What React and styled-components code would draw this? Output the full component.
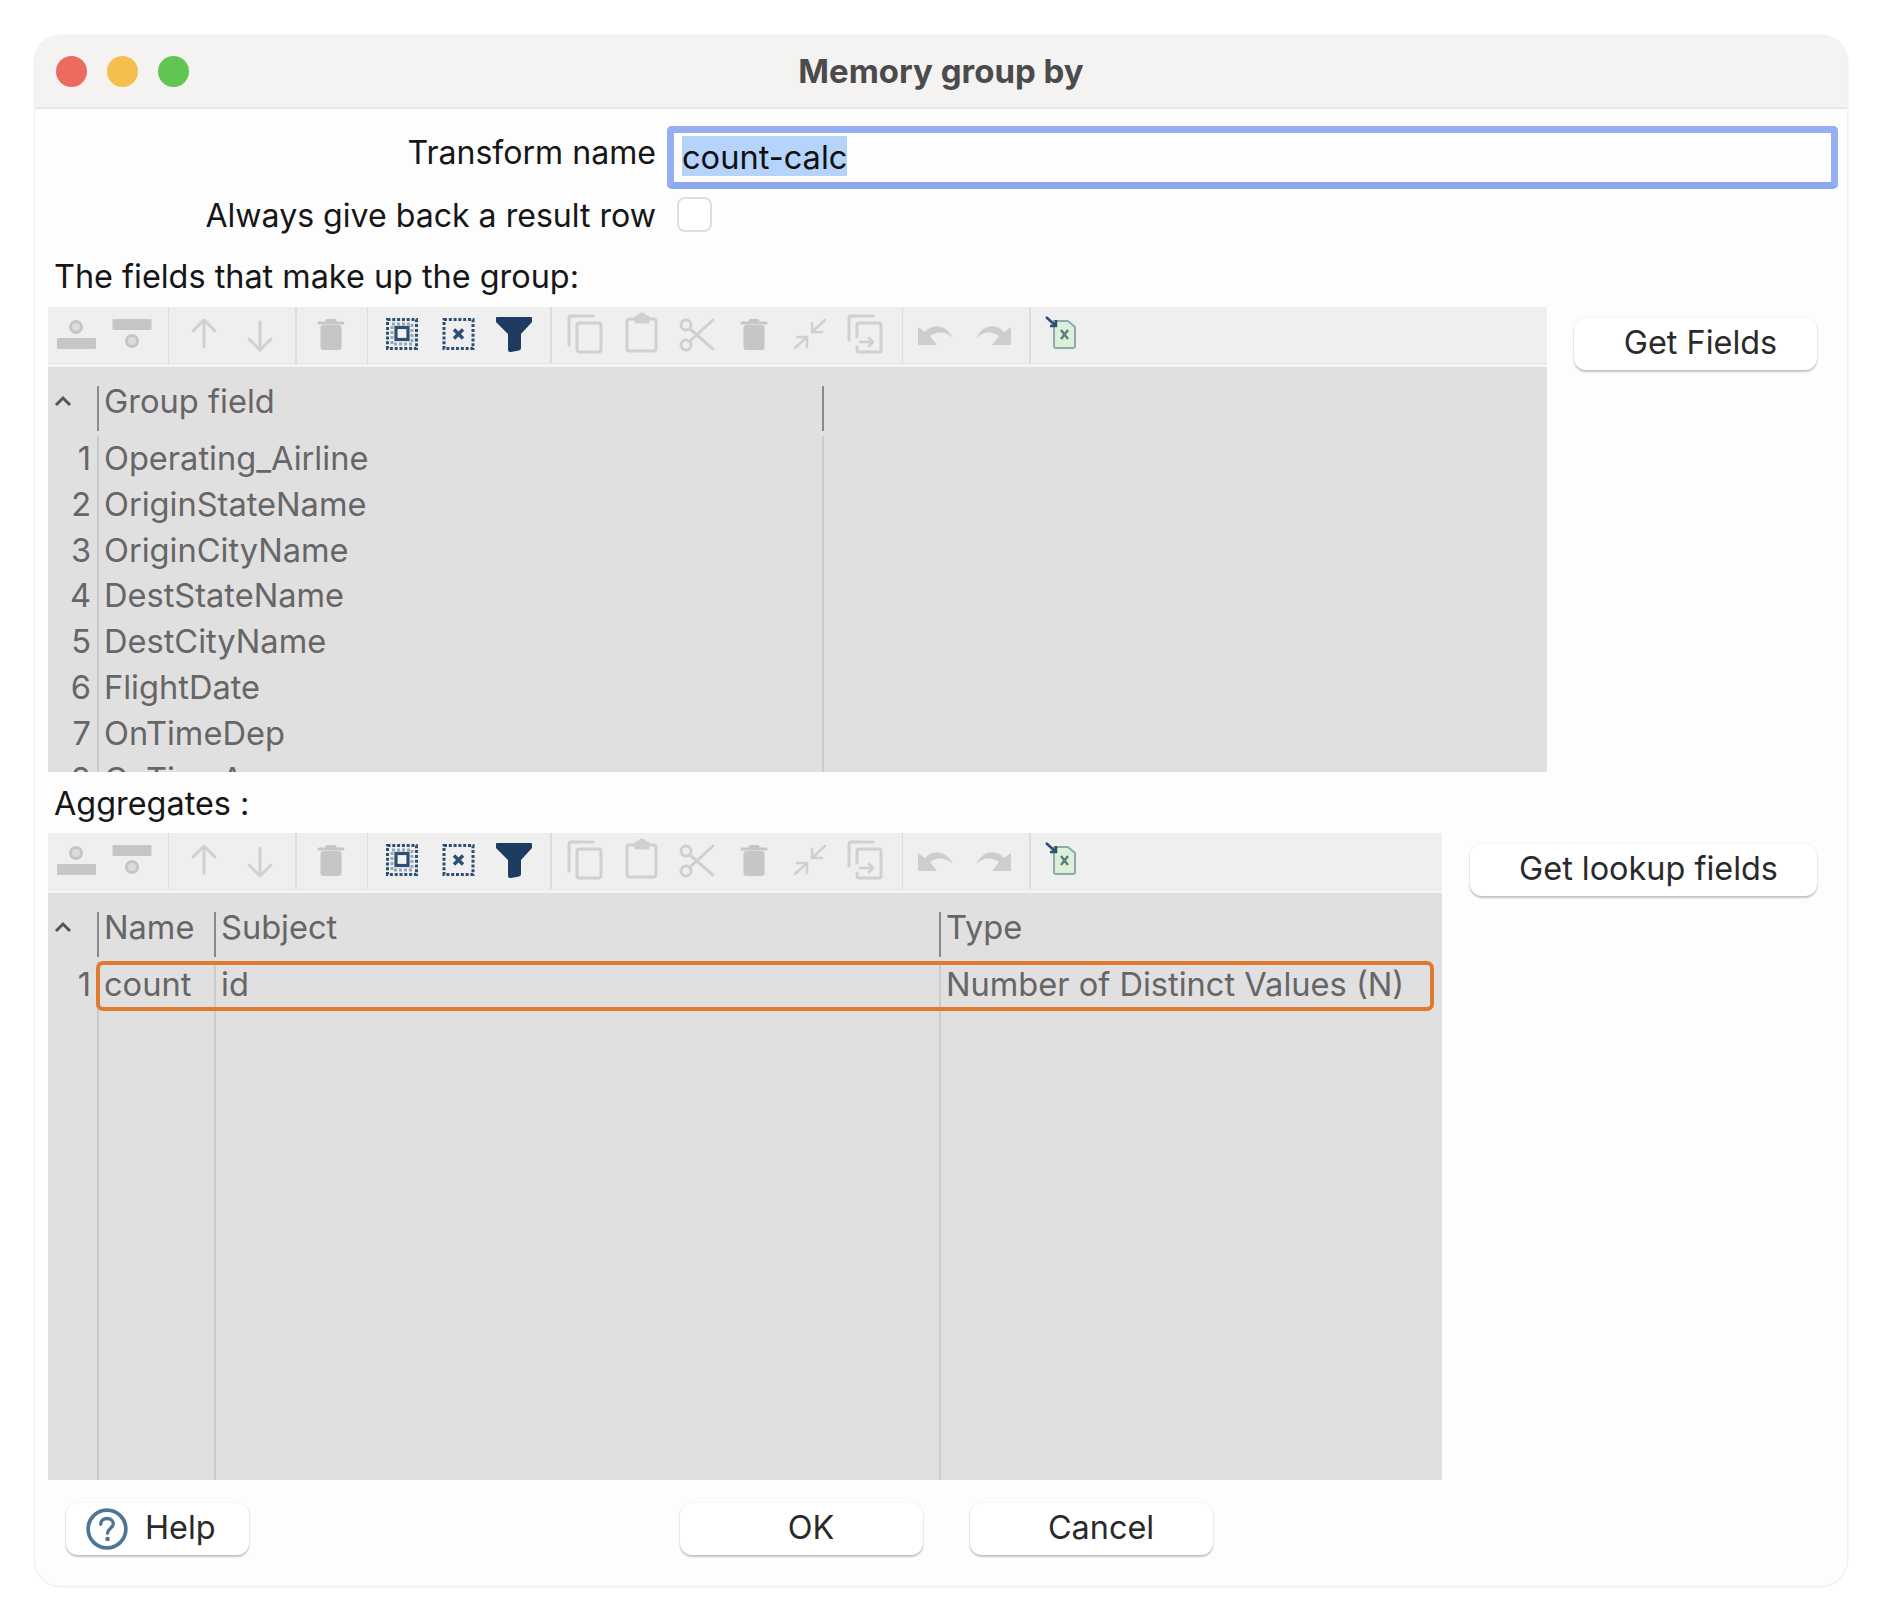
import React from "react";
import styled, { createGlobalStyle } from "styled-components";

const GlobalStyle = createGlobalStyle`
  html, body {
    margin: 0;
    padding: 0;
    background: #ffffff;
    font-family: "Inter", "Liberation Sans", sans-serif;
  }
`;

const GRAY = "#c6c6c6";
const LINE = "#d0d0d0";
const NAVY = "#2c4f76";

/* each glyph is drawn in the 56x56 box of one toolbar button */
const Trash = () => (
  <>
    <path d="M24 13.5H32M16 16H40" fill="none" stroke={GRAY} strokeWidth="3" strokeLinecap="round" />
    <rect x="17.5" y="18" width="21" height="25" rx="3" fill={GRAY} />
  </>
);

const ICONS = {
  rowBefore: (
    <>
      <circle cx="28" cy="20" r="5.5" fill="#dcdcdc" stroke={GRAY} strokeWidth="3" />
      <rect x="9" y="31" width="39" height="11" rx="1" fill={GRAY} />
    </>
  ),
  rowAfter: (
    <>
      <rect x="8.5" y="12" width="39" height="11" rx="1" fill={GRAY} />
      <circle cx="28" cy="34" r="5.5" fill="#dcdcdc" stroke={GRAY} strokeWidth="3" />
    </>
  ),
  up: <path d="M29 40V14M18 24L29 13L40 24" fill="none" stroke={LINE} strokeWidth="3" strokeLinecap="round" strokeLinejoin="round" />,
  down: <path d="M29 15V42M18 32L29 43L40 32" fill="none" stroke={LINE} strokeWidth="3" strokeLinecap="round" strokeLinejoin="round" />,
  trash: <Trash />,
  selectAll: (
    <>
      <rect x="13.5" y="12.5" width="29" height="29" fill="none" stroke={NAVY} strokeWidth="3" strokeDasharray="3 1.8" />
      <rect x="18" y="17" width="20" height="20" fill="none" stroke={NAVY} strokeOpacity="0.45" strokeWidth="3" strokeDasharray="3 2" />
      <rect x="22" y="20.5" width="12" height="12" fill="#f4f4f4" stroke={NAVY} strokeWidth="3.2" />
    </>
  ),
  clearAll: (
    <>
      <rect x="14" y="12.5" width="29" height="29" fill="none" stroke={NAVY} strokeWidth="3" strokeDasharray="3 1.8" />
      <path d="M24 22.5L33 31.5M33 22.5L24 31.5" fill="none" stroke={NAVY} strokeWidth="3.5" />
    </>
  ),
  filter: <path d="M10 11Q10 10 11 10H45Q46 10 46 11V15L35 27V41Q35 43 33 43.5L25 45Q22 45.5 22 43V27L10 15Z" fill="#1d3c5f" />,
  copy: (
    <g fill="none" stroke={LINE} strokeWidth="3" strokeLinejoin="round" strokeLinecap="round">
      <path d="M11 38V11Q11 9 13 9H35" />
      <rect x="19" y="16" width="24" height="29" rx="2.5" />
    </g>
  ),
  paste: (
    <g fill="none" stroke={LINE} strokeWidth="3" strokeLinejoin="round">
      <rect x="13" y="12" width="29" height="32" rx="2.5" />
      <path d="M22 12V10H25A3 3 0 0 1 31 10H34V15H22Z" fill={LINE} />
    </g>
  ),
  cut: (
    <g fill="none" stroke={LINE} strokeWidth="3" strokeLinecap="round">
      <circle cx="16" cy="18" r="5" />
      <circle cx="16" cy="38" r="5" />
      <path d="M20 22L43 42M20 34L43 13" />
    </g>
  ),
  collapse: (
    <g fill="none" stroke={LINE} strokeWidth="2.5" strokeLinecap="round" strokeLinejoin="round">
      <path d="M43 13L30 25M30 16V25H40" />
      <path d="M13 41L25 30M15 30H25V40" />
    </g>
  ),
  duplicate: (
    <g fill="none" stroke={LINE} strokeWidth="3" strokeLinejoin="round" strokeLinecap="round">
      <path d="M11 33V11Q11 9 13 9H35" />
      <path d="M19 30V18Q19 16 21 16H41Q43 16 43 18V43Q43 45 41 45H21Q19 45 19 43V40" />
      <path d="M22 35H35M31 31L35 35L31 39" strokeWidth="2.5" />
    </g>
  ),
  undo: <path d="M9 20L16 25C23 17 36 16 44 31C36 24 28 24 21 29L28 38H9Z" fill="#cdcdcd" />,
  redo: <path d="M46 20L39 25C32 17 19 16 11 31C19 24 27 24 34 29L27 38H46Z" fill="#cdcdcd" />,
  exportXls: (
    <g transform="translate(-2 0)">
      <path d="M19 14H33L40 20V39Q40 41 38 41H21Q19 41 19 39Z" fill="#dcefd8" stroke="#93a8ad" strokeWidth="2" strokeLinejoin="round" />
      <path d="M11 10L21 19M21 13V19H15" fill="none" stroke={NAVY} strokeWidth="2.5" />
      <path d="M26 23L33 32M33 23L26 32" fill="none" stroke="#5d7d80" strokeWidth="2.5" />
    </g>
  ),
};

const TOOL_GROUPS = [
  ["rowBefore", "rowAfter"],
  ["up", "down"],
  ["trash"],
  ["selectAll", "clearAll", "filter"],
  ["copy", "paste", "cut", "trash", "collapse", "duplicate"],
  ["undo", "redo"],
  ["exportXls"],
];

const App = () => (
  <>
    <GlobalStyle />
    <Page>
      <Window>
        <TitleBar>
          <Lights>
            <Light $color="#ec6a5e" />
            <Light $color="#f4bf4f" />
            <Light $color="#61c554" />
          </Lights>
          <WindowTitle>Memory group by</WindowTitle>
        </TitleBar>

        <Form>
          <FormLabel $raised>Transform name</FormLabel>
          <NameField>
            <Selection>count-calc</Selection>
          </NameField>
          <FormLabel>Always give back a result row</FormLabel>
          <Checkbox />
        </Form>

        <SectionTitle>The fields that make up the group:</SectionTitle>
        <Section>
          <Panel $width={1499}>
            <Toolbar />
            <Table $height={405}>
              <Column $width={49}>
                <SortCell>
                  <SortChevron />
                </SortCell>
                {[1, 2, 3, 4, 5, 6, 7, 8].map((n) => (
                  <RowNumber key={n}>{n}</RowNumber>
                ))}
              </Column>
              <Column $width={725}>
                <HeadCell>Group field</HeadCell>
                <ColumnBody>
                  {["Operating_Airline", "OriginStateName", "OriginCityName", "DestStateName", "DestCityName", "FlightDate", "OnTimeDep", "OnTimeArr"].map((f) => (
                    <Cell key={f}>{f}</Cell>
                  ))}
                </ColumnBody>
              </Column>
              <Column $grow>
                <HeadCell />
                <ColumnBody />
              </Column>
            </Table>
          </Panel>
          <SideButton $width={243}>Get Fields</SideButton>
        </Section>

        <SectionTitle $tight>Aggregates :</SectionTitle>
        <Section>
          <Panel $width={1394}>
            <Toolbar />
            <Table $height={587}>
              <Column $width={49}>
                <SortCell>
                  <SortChevron />
                </SortCell>
                <RowNumber>1</RowNumber>
              </Column>
              <Column $width={117}>
                <HeadCell>Name</HeadCell>
                <ColumnBody>
                  <Cell>count</Cell>
                </ColumnBody>
              </Column>
              <Column $width={725}>
                <HeadCell>Subject</HeadCell>
                <ColumnBody>
                  <Cell>id</Cell>
                </ColumnBody>
              </Column>
              <Column $grow>
                <HeadCell>Type</HeadCell>
                <ColumnBody>
                  <Cell>Number of Distinct Values (N)</Cell>
                </ColumnBody>
              </Column>
              <RowHighlight />
            </Table>
          </Panel>
          <SideButton $width={347}>Get lookup fields</SideButton>
        </Section>

        <Footer>
          <HelpButton>
            <svg width="44" height="44" viewBox="0 0 42 42" aria-hidden="true">
              <circle cx="21" cy="21" r="18" fill="#fff" stroke="#4d7596" strokeWidth="3.5" />
              <path d="M15 16.5C15 12.5 18 11 21 11C24.5 11 27 13 27 16C27 20 21.5 20.5 21.5 25" fill="none" stroke="#4d7596" strokeWidth="3.2" strokeLinecap="round" />
              <circle cx="21.5" cy="30.5" r="2.2" fill="#4d7596" />
            </svg>
            <ButtonText>Help</ButtonText>
          </HelpButton>
          <FooterButtons>
            <DialogButton $width={243}>OK</DialogButton>
            <DialogButton $width={243}>Cancel</DialogButton>
          </FooterButtons>
        </Footer>
      </Window>
    </Page>
  </>
);

const Toolbar = () => (
  <ToolRow>
    {TOOL_GROUPS.map((group, i) => (
      <React.Fragment key={i}>
        {i > 0 && <ToolSeparator />}
        {group.map((name, j) => (
          <ToolIcon key={j} viewBox="1 0 56 56" aria-hidden="true">
            {ICONS[name]}
          </ToolIcon>
        ))}
      </React.Fragment>
    ))}
  </ToolRow>
);

const SortChevron = () => (
  <svg width="20" height="13" viewBox="0 0 20 13" aria-hidden="true">
    <path d="M3 10L10 3L17 10" fill="none" stroke="#555" strokeWidth="3" />
  </svg>
);

export default App;

const Page = styled.div`
  width: 1880px;
  height: 1608px;
  padding: 36px 32px 22px 35px;
  box-sizing: border-box;
  background: #ffffff;
`;

const Window = styled.div`
  width: 1812px;
  height: 1550px;
  box-sizing: border-box;
  background: #fdfdfd;
  border-radius: 26px;
  box-shadow: 0 0 0 1.5px #f1f1f1;
  overflow: hidden;
`;

const TitleBar = styled.div`
  position: relative;
  height: 73px;
  box-sizing: border-box;
  display: flex;
  align-items: center;
  justify-content: center;
  background: #f4f3f2;
  border-bottom: 2px solid #e6e6e6;
`;

const Lights = styled.div`
  position: absolute;
  left: 21px;
  top: 20px;
  display: flex;
  gap: 20px;
`;

const Light = styled.span`
  width: 31px;
  height: 31px;
  border-radius: 50%;
  background: ${(p) => p.$color};
`;

const WindowTitle = styled.div`
  font-size: 33px;
  font-weight: 700;
  color: #4b4b4b;
  margin-top: -2px;
`;

const Form = styled.div`
  display: grid;
  grid-template-columns: 621px 1fr;
  grid-template-rows: 63px 35px;
  column-gap: 11px;
  row-gap: 8px;
  align-items: center;
  padding: 17px 9px 0 0;
`;

const FormLabel = styled.div`
  font-size: 32.1px;
  line-height: 35px;
  padding: ${(p) => (p.$raised ? "0 0 10px" : "2px 0 0")};
  color: #161616;
  text-align: right;
  white-space: nowrap;
`;

const NameField = styled.div`
  height: 63px;
  box-sizing: border-box;
  padding: 3px 8px 0;
  display: flex;
  align-items: flex-start;
  background: #fefefe;
  border: 7px solid #96aff2;
  border-bottom-color: #8ba7ee;
  border-radius: 5px;
`;

const Selection = styled.span`
  height: 40px;
  line-height: 42px;
  font-size: 32.6px;
  color: #111;
  background: #b5d3fb;
`;

const Checkbox = styled.div`
  width: 35px;
  height: 35px;
  margin-left: 10px;
  box-sizing: border-box;
  background: #fff;
  border: 2px solid #dedede;
  border-radius: 8px;
`;

const SectionTitle = styled.div`
  margin: ${(p) => (p.$tight ? "12px" : "25px")} 0 ${(p) => (p.$tight ? "9px" : "10px")} 19px;
  height: 40px;
  line-height: 40px;
  font-size: 32.4px;
  color: #161616;
`;

const Section = styled.div`
  display: flex;
  justify-content: space-between;
  align-items: flex-start;
  padding: 0 30px 0 13px;
`;

const Panel = styled.div`
  width: ${(p) => p.$width}px;
`;

const ToolRow = styled.div`
  height: 57px;
  box-sizing: border-box;
  padding-left: 0.8px;
  display: flex;
  background: #efefef;
  border-bottom: 1px solid #e5e5e5;
`;

const ToolIcon = styled.svg`
  flex: 0 0 56px;
  width: 56px;
  height: 56px;
  filter: blur(0.5px);
`;

const ToolSeparator = styled.span`
  flex: 0 0 1.5px;
  margin: 0 7px;
  background: #dcdcdc;
`;

const Table = styled.div`
  position: relative;
  height: ${(p) => p.$height}px;
  display: flex;
  overflow: hidden;
  background: #e0e0e0;
  border-top: 3px solid #f4f4f4;
`;

const Column = styled.div`
  display: flex;
  flex-direction: column;
  flex: ${(p) => (p.$grow ? "1 1 0" : `0 0 ${p.$width}px`)};
  min-width: 0;
`;

const SortCell = styled.div`
  height: 69px;
  flex: none;
  padding: 0 0 0 5px;
  display: flex;
  align-items: center;
`;

const RowNumber = styled.div`
  height: 45.8px;
  flex: none;
  padding-right: 6px;
  text-align: right;
  line-height: 45.8px;
  font-size: 32.6px;
  color: #666;
`;

const HeadCell = styled.div`
  position: relative;
  height: 69px;
  flex: none;
  box-sizing: border-box;
  padding-left: 7px;
  line-height: 69px;
  font-size: 32.6px;
  color: #666;
  white-space: nowrap;

  &::before {
    content: "";
    position: absolute;
    left: 0;
    top: 19px;
    bottom: 5px;
    width: 2px;
    background: #8a8a8a;
  }
`;

const ColumnBody = styled.div`
  flex: 1;
  border-left: 2px solid #cbcbcb;
`;

const Cell = styled.div`
  height: 45.8px;
  padding-left: 5px;
  line-height: 45.8px;
  font-size: 32.6px;
  color: #666;
  white-space: nowrap;
`;

const RowHighlight = styled.div`
  position: absolute;
  left: 48px;
  top: 68px;
  width: 1338px;
  height: 50px;
  box-sizing: border-box;
  border: 4px solid #e07a30;
  border-radius: 7px;
`;

const PushButton = styled.div`
  height: 52px;
  box-sizing: border-box;
  display: flex;
  align-items: center;
  justify-content: center;
  padding-bottom: 3px;
  background: #ffffff;
  border-radius: 12px;
  box-shadow: 0 2px 2px rgba(0, 0, 0, 0.22), 0 0 2px rgba(0, 0, 0, 0.1);
  font-size: 32.4px;
  color: #2a2a2a;
`;

const SideButton = styled(PushButton)`
  width: ${(p) => p.$width}px;
  margin-top: 11px;
  padding-left: 10px;
`;

const DialogButton = styled(PushButton)`
  width: ${(p) => p.$width}px;
  padding-left: 19px;
`;

const HelpButton = styled(PushButton)`
  width: 183px;
  gap: 16px;
  justify-content: flex-start;
  padding: 0 0 0 19px;
`;

const ButtonText = styled.span`
  padding-bottom: 3px;
`;

const Footer = styled.div`
  display: flex;
  padding: 23px 0 0 31px;
`;

const FooterButtons = styled.div`
  display: flex;
  gap: 47px;
  margin-left: 431px;
`;
